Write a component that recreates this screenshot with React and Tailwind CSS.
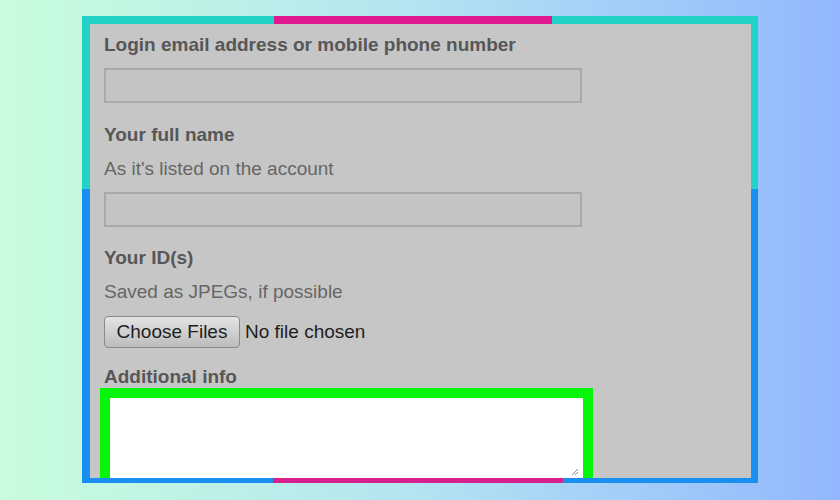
import React from 'react';

const font = { fontFamily: '"Liberation Sans", Arial, sans-serif' };

const Label = ({ children, className = '' }) => (
    <div className={`text-[19px] leading-[22px] font-bold text-[#575757] ${className}`}>{children}</div>
);

const Hint = ({ children, className = '' }) => (
    <div className={`text-[19px] leading-[22px] text-[#666666] ${className}`}>{children}</div>
);

const Field = ({ className = '' }) => (
    <div className={`w-[478px] h-[35px] border-2 border-[#a9a9a9] bg-[#c4c4c4] ${className}`} />
);

const App = () => {
    return (
        <div
            className="w-[840px] h-[500px] overflow-hidden bg-linear-to-r from-[#c8fedc] via-[#b3e4f1] to-[#92b7fe] pt-[16px] pl-[82px]"
            style={font}
        >
            <div className="w-[676px] h-[467px] flex flex-col">
                {/* top bar */}
                <div className="h-[8px] flex shrink-0">
                    <div className="w-[192px] bg-[#22d2c6]" />
                    <div className="w-[278px] bg-[#e0198f]" />
                    <div className="flex-1 bg-[#22d2c6]" />
                </div>

                <div className="flex-1 flex min-h-0">
                    <div className="w-[8px] flex flex-col shrink-0">
                        <div className="h-[165px] bg-[#22d2c6]" />
                        <div className="flex-1 bg-[#1a8ff2]" />
                    </div>

                    <div className="flex-1 bg-[#c6c6c6] overflow-hidden pl-[14px] pt-[10px]">
                        <Label>Login email address or mobile phone number</Label>
                        <Field className="mt-[12px]" />

                        <Label className="mt-[21px]">Your full name</Label>
                        <Hint className="mt-[12px]">As it's listed on the account</Hint>
                        <Field className="mt-[12px]" />

                        <Label className="mt-[20px]">Your ID(s)</Label>
                        <Hint className="mt-[12px]">Saved as JPEGs, if possible</Hint>

                        <div className="mt-[13px] flex items-center gap-[5px]">
                            <button className="w-[136px] h-[32px] rounded-[4px] border border-[#8a8a8a] bg-linear-to-b from-[#e4e4e4] to-[#bcbcbc] text-[19px] leading-[22px] text-[#1e1e1e]">
                                Choose Files
                            </button>
                            <span className="text-[19px] leading-[22px] text-[#1e1e1e]">No file chosen</span>
                        </div>

                        <Label className="mt-[18px]">Additional info</Label>
                        <div className="-ml-[4px] w-[493px] h-[120px] border-[10px] border-[#06f50a] bg-white relative">
                            <svg className="absolute right-[4px] bottom-[22px]" width="8" height="8" viewBox="0 0 8 8">
                                <path d="M7 1 L1 7 M7 4 L4 7" stroke="#8a8a8a" strokeWidth="1" />
                            </svg>
                        </div>
                    </div>

                    <div className="w-[7px] flex flex-col shrink-0">
                        <div className="h-[165px] bg-[#22d2c6]" />
                        <div className="flex-1 bg-[#1a8ff2]" />
                    </div>
                </div>

                {/* bottom bar */}
                <div className="h-[5px] flex shrink-0">
                    <div className="w-[191px] bg-[#1a8ff2]" />
                    <div className="w-[290px] bg-[#d91e8e]" />
                    <div className="flex-1 bg-[#1a8ff2]" />
                </div>
            </div>
        </div>
    );
};

export default App;
